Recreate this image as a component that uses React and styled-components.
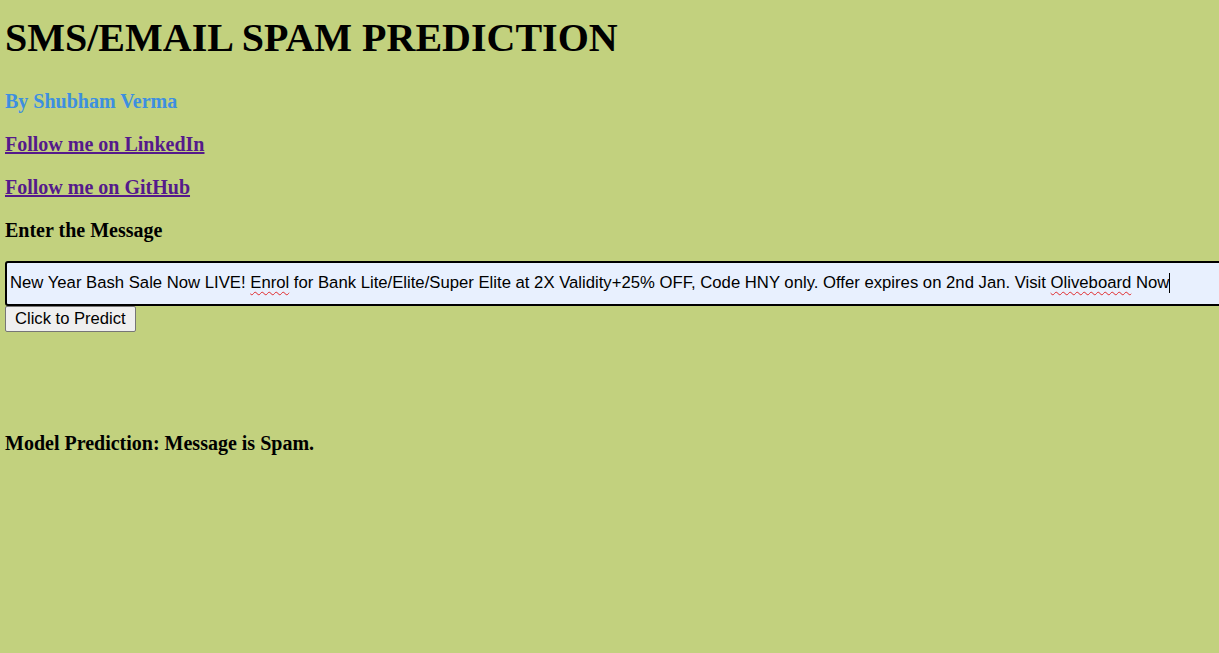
import React from 'react'
import styled, { createGlobalStyle } from 'styled-components'

const Global = createGlobalStyle`
    html, body {
        background-color: rgb(194, 209, 126);
        margin: 0;
        min-height: 100%;
    }
    body {
        font-family: "Liberation Serif", "Times New Roman", serif;
        padding: 0 5px;
    }
`

const Page = styled.div`
    display: flex;
    flex-flow: column;
    align-items: flex-start;
`

const Title = styled.h1`
    color: #000;
    font-size: 40px;
    font-weight: 700;
    line-height: 46px;
    margin: 14.5px 0 0;
`

const Heading = styled.h3`
    color: ${(props) => props.color || '#000'};
    font-size: 20px;
    font-weight: 700;
    line-height: 23px;
    margin: ${(props) => props.gap || '20px'} 0 0;
`

const Link = styled.a`
    color: #551a8b;
    text-decoration: underline;
`

const Field = styled.div`
    align-items: center;
    background-color: #e8f0fe;
    border: 2px solid #000;
    border-radius: 3px;
    box-sizing: border-box;
    color: #000;
    display: flex;
    font-family: "Liberation Sans", Arial, sans-serif;
    font-size: 16.7px;
    height: 45px;
    margin-top: 19px;
    outline: none;
    overflow: hidden;
    padding: 0 3px;
    white-space: pre;
    width: calc(100% + 20px);
`

const Typo = styled.span`
    text-decoration: underline wavy #e0292b;
    text-decoration-thickness: 1px;
    text-underline-offset: 3px;
`

const Caret = styled.span`
    background-color: #000;
    display: inline-block;
    height: 20px;
    width: 1px;
`

const Button = styled.button`
    background-color: #efefef;
    border: 1px solid #767676;
    border-radius: 2px;
    box-sizing: border-box;
    color: #000;
    font-family: "Liberation Sans", Arial, sans-serif;
    font-size: 16.6px;
    height: 26px;
    padding: 1px 9px;
`

const App = () => {
    return (
        <Page>
            <Global />
            <Title>SMS/EMAIL SPAM PREDICTION</Title>
            <Heading color="#3d8fe0" gap="29px">
                By Shubham Verma
            </Heading>
            <Heading>
                <Link href="#">Follow me on LinkedIn</Link>
            </Heading>
            <Heading>
                <Link href="#">Follow me on GitHub</Link>
            </Heading>
            <Heading>Enter the Message</Heading>
            <Field role="textbox" contentEditable suppressContentEditableWarning spellCheck={false}>
                New Year Bash Sale Now LIVE! <Typo>Enrol</Typo> for Bank Lite/Elite/Super
                Elite at 2X Validity+25% OFF, Code HNY only. Offer expires on 2nd Jan.
                Visit <Typo>Oliveboard</Typo> Now
                <Caret />
            </Field>
            <Button>Click to Predict</Button>
            <Heading gap="100px">Model Prediction: Message is Spam.</Heading>
        </Page>
    )
}

export default App
